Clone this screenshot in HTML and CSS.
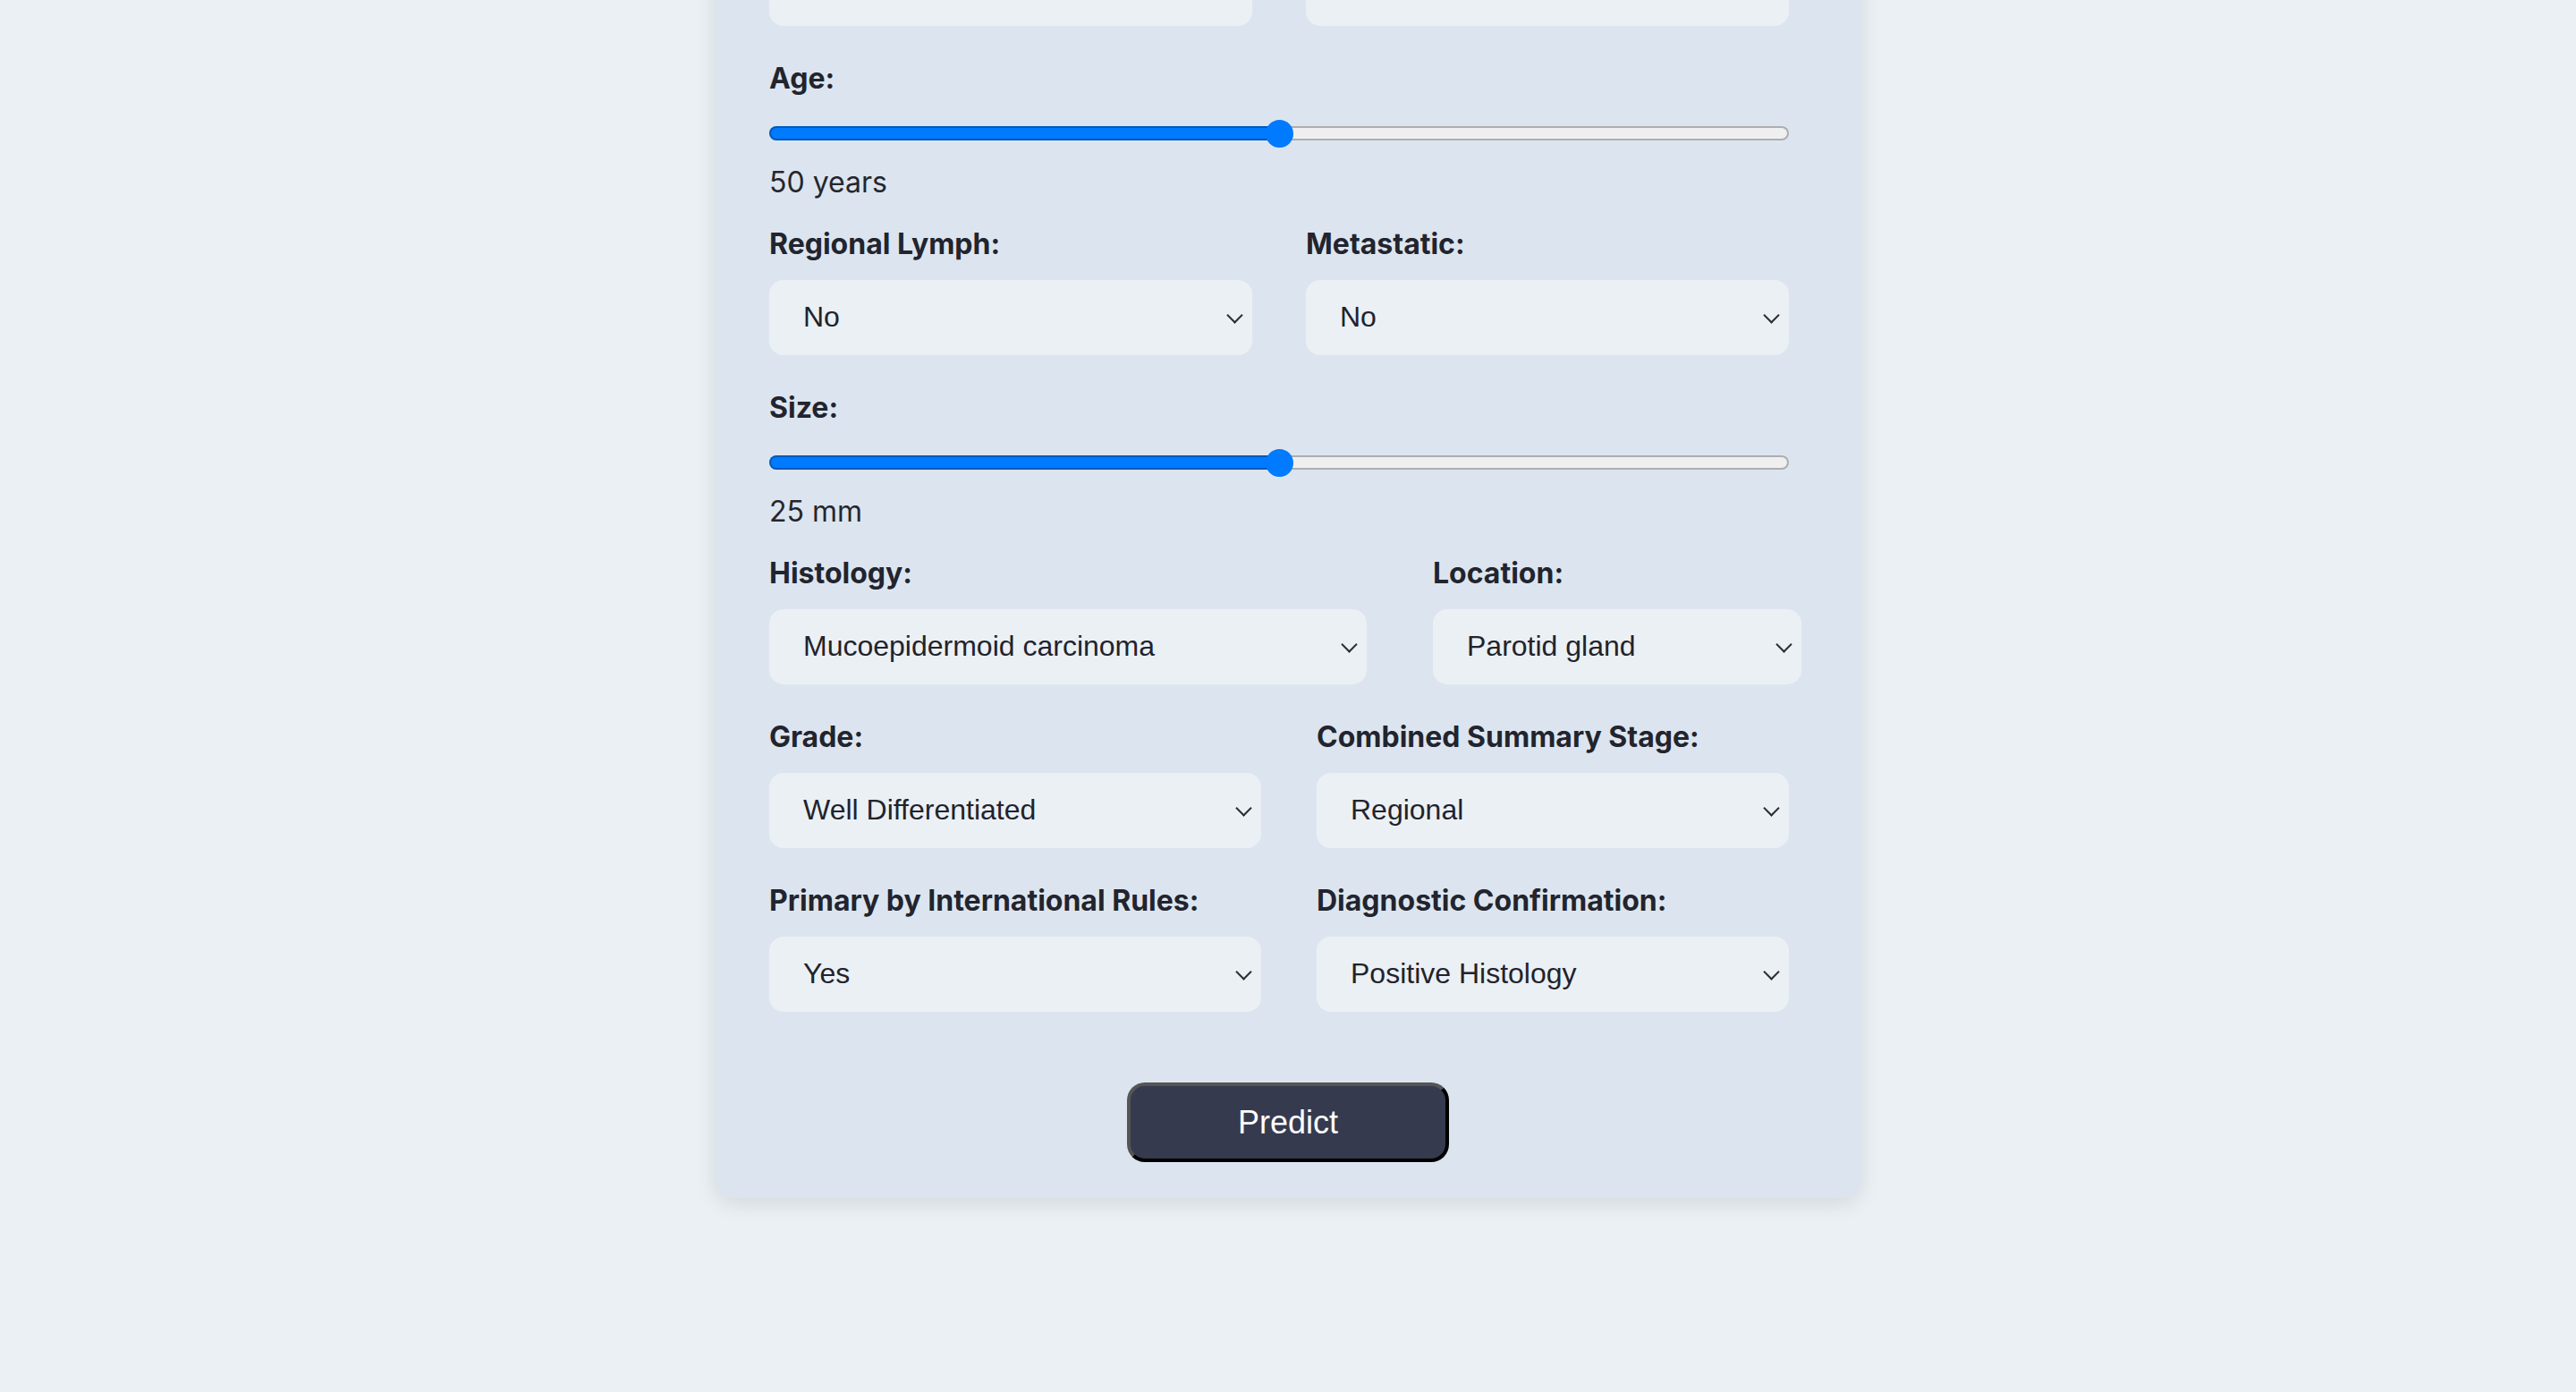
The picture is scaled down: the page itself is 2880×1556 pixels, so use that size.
FILE: index.html
```html
<!DOCTYPE html>
<html lang="en">
<head>
<meta charset="utf-8">
<title>Predictor</title>
<link rel="stylesheet" href="styles.css">
</head>
<body>
<div class="page">
  <main class="card">
    <div class="row row--half">
      <div class="field">
        <div class="select-wrap select-wrap--plain"><select class="select" aria-label="Sex"><option></option></select></div>
      </div>
      <div class="field">
        <div class="select-wrap select-wrap--plain"><select class="select" aria-label="Race"><option></option></select></div>
      </div>
    </div>

    <div class="field field--range">
      <label class="label">Age:</label>
      <input class="range" type="range" min="0" max="100" value="50" style="--pct:50%">
      <div class="range-value">50 years</div>
    </div>

    <div class="row row--half">
      <div class="field">
        <label class="label">Regional Lymph:</label>
        <div class="select-wrap"><select class="select"><option>No</option><option>Yes</option></select></div>
      </div>
      <div class="field">
        <label class="label">Metastatic:</label>
        <div class="select-wrap"><select class="select"><option>No</option><option>Yes</option></select></div>
      </div>
    </div>

    <div class="field field--range">
      <label class="label">Size:</label>
      <input class="range" type="range" min="0" max="50" value="25" style="--pct:50%">
      <div class="range-value">25 mm</div>
    </div>

    <div class="row row--hist">
      <div class="field">
        <label class="label">Histology:</label>
        <div class="select-wrap"><select class="select"><option>Mucoepidermoid carcinoma</option></select></div>
      </div>
      <div class="field">
        <label class="label">Location:</label>
        <div class="select-wrap"><select class="select"><option>Parotid gland</option></select></div>
      </div>
    </div>

    <div class="row row--grade">
      <div class="field">
        <label class="label">Grade:</label>
        <div class="select-wrap"><select class="select"><option>Well Differentiated</option></select></div>
      </div>
      <div class="field">
        <label class="label">Combined Summary Stage:</label>
        <div class="select-wrap"><select class="select"><option>Regional</option></select></div>
      </div>
    </div>

    <div class="row row--grade">
      <div class="field">
        <label class="label">Primary by International Rules:</label>
        <div class="select-wrap"><select class="select"><option>Yes</option><option>No</option></select></div>
      </div>
      <div class="field">
        <label class="label">Diagnostic Confirmation:</label>
        <div class="select-wrap"><select class="select"><option>Positive Histology</option></select></div>
      </div>
    </div>

    <div class="actions">
      <button class="btn" type="button">Predict</button>
    </div>
  </main>
</div>
</body>
</html>
```

FILE: styles.css
```css
* { box-sizing: border-box; }

html, body {
  margin: 0;
  padding: 0;
  background: #ebf0f5;
}

body {
  font-family: Inter, "Noto Sans", sans-serif;
  color: #23252f;
  height: 1556px;
  overflow: hidden;
}

.page {
  display: flex;
  justify-content: center;
}

.card {
  width: 1280px;
  margin-top: -115px;
  padding: 60px 60px 40px 60px;
  background: #dce5ef;
  border-radius: 20px;
  box-shadow: 0 6px 24px rgba(0, 0, 0, 0.10);
}

.row {
  display: grid;
}

.row--half {
  grid-template-columns: 540px 540px;
  column-gap: 60px;
}

.row--hist {
  grid-template-columns: 668px 412px;
  column-gap: 74px;
}

.row--grade {
  grid-template-columns: 550px 528px;
  column-gap: 62px;
}

.field {
  margin-bottom: 39px;
}

.field--range {
  margin-bottom: 29px;
}

.label {
  display: block;
  font-family: Inter, "Noto Sans", sans-serif;
  font-weight: 700;
  font-size: 32px;
  line-height: 40px;
  margin-bottom: 20px;
  color: #22242e;
  white-space: nowrap;
}

.select-wrap {
  position: relative;
}

.select-wrap::after {
  content: "";
  position: absolute;
  right: 13px;
  top: 50%;
  width: 11px;
  height: 11px;
  margin-top: -9px;
  border-right: 2px solid #2c2d33;
  border-bottom: 2px solid #2c2d33;
  transform: rotate(45deg);
  pointer-events: none;
}

.select-wrap--plain::after {
  display: none;
}

.select {
  -webkit-appearance: none;
  appearance: none;
  display: block;
  width: 100%;
  height: 84px;
  padding: 0 50px 3px 38px;
  border: none;
  border-radius: 16px;
  background: #ebf0f5;
  font-family: "Liberation Sans", Arial, sans-serif;
  font-size: 32px;
  color: #22232b;
  outline: none;
}

.range {
  -webkit-appearance: none;
  appearance: none;
  display: block;
  width: 1140px;
  height: 32px;
  margin: 25px 0 0 0;
  padding: 0;
  background: transparent;
}

.range::-webkit-slider-runnable-track {
  height: 16px;
  border-radius: 8px;
  background: linear-gradient(to right, #007aff 0, #007aff var(--pct), #efefef var(--pct), #efefef 100%);
  box-shadow: inset 0 0 0 2px rgba(0, 0, 0, 0.27);
}

.range::-webkit-slider-thumb {
  -webkit-appearance: none;
  appearance: none;
  width: 31px;
  height: 31px;
  margin-top: -7.5px;
  border: none;
  border-radius: 50%;
  background: #007aff;
}

.range-value {
  margin-top: 19px;
  font-family: Inter, "Noto Sans", sans-serif;
  font-size: 32px;
  line-height: 40px;
  color: #25262e;
}

.actions {
  display: flex;
  justify-content: center;
  margin-top: 40px;
}

.btn {
  width: 360px;
  height: 89px;
  background: #363a4f;
  color: #ffffff;
  font-family: "Liberation Sans", Arial, sans-serif;
  font-size: 36px;
  border-width: 4px;
  border-style: solid;
  border-color: #555555 #000000 #000000 #555555;
  border-radius: 20px;
  cursor: pointer;
}
```
